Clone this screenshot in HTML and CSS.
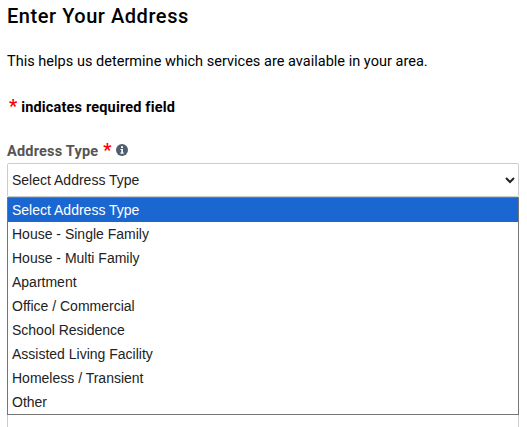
FILE: index.html
```html
<!DOCTYPE html>
<html>
<head>
    <title>Enter Your Address</title>
    <link rel="stylesheet" href="styles.css">
</head>
<body>
    <h1>Enter Your Address</h1>
    <p class="intro">This helps us determine which services are available in your area.</p>
    <p class="required-note"><span class="star">*</span> indicates required field</p>

    <div class="field">
        <label class="field-label" for="addressType">
            Address Type <span class="star">*</span>
            <svg class="info-icon" viewBox="0 0 12 12" width="12" height="12">
                <circle cx="6" cy="6" r="6" fill="#4f5f6f"/>
                <rect x="5" y="2.2" width="2" height="1.9" fill="#fff"/>
                <path d="M4.5 5h2.5v3.6h.7v1.1H4.4V8.6h.9V6.1h-.8z" fill="#fff"/>
            </svg>
        </label>
        <select class="select-box" id="addressType">
            <option>Select Address Type</option>
        </select>
        <ul class="options">
            <li class="selected">Select Address Type</li>
            <li>House - Single Family</li>
            <li>House - Multi Family</li>
            <li>Apartment</li>
            <li>Office / Commercial</li>
            <li>School Residence</li>
            <li>Assisted Living Facility</li>
            <li>Homeless / Transient</li>
            <li>Other</li>
        </ul>
    </div>

    <div class="next-input"></div>
</body>
</html>
```

FILE: styles.css
```css
html {
    height: 100%;
    overflow: hidden;
}

body {
    font-family: Roboto, Arial, sans-serif;
    color: #000;
    background-color: #fff;
    margin: 0;
    padding: 0 8px 0 7px;
    height: 427px;
    overflow: hidden;
}

h1 {
    font-size: 20px;
    font-weight: 500;
    line-height: 24px;
    letter-spacing: 0.55px;
    margin: 0;
    padding-top: 4px;
}

.intro {
    font-size: 14.5px;
    line-height: 20px;
    letter-spacing: 0.02px;
    margin: 24px 0 0 0;
}

.required-note {
    font-size: 14.5px;
    font-weight: 700;
    line-height: 20px;
    letter-spacing: 0.17px;
    margin: 26px 0 0 0;
}

.star {
    color: #f00;
    font-size: 18px;
    line-height: 14px;
    margin: 0 0 0 2px;
}

.field {
    position: relative;
    margin-top: 24px;
}

.field-label {
    display: block;
    font-size: 14.5px;
    font-weight: 700;
    line-height: 20px;
    letter-spacing: 0.2px;
    color: #555;
    height: 21px;
}

.field-label .star {
    margin: 0 0 0 1px;
}

.info-icon {
    margin-left: 1px;
}

.select-box {
    display: block;
    width: 100%;
    height: 34px;
    padding: 0;
    font-family: "Liberation Sans", Arial, sans-serif;
    font-size: 14px;
    color: #222;
    background-color: #fff;
    border: 1px solid #ccc;
    border-radius: 2px;
}

.options {
    position: absolute;
    left: 0;
    right: 0;
    top: 55px;
    list-style-type: none;
    margin: 0;
    padding: 0;
    background-color: #fff;
    border: 1px solid #767676;
    font-family: "Liberation Sans", Arial, sans-serif;
    font-size: 14px;
    color: #222;
}

.options li {
    height: 24px;
    line-height: 24px;
    padding-left: 4px;
}

.options .selected {
    background-color: #1a67d2;
    color: #fff;
}

.next-input {
    height: 26px;
    margin-top: 203px;
    border: 1px solid #ccc;
    border-bottom: none;
}
```
